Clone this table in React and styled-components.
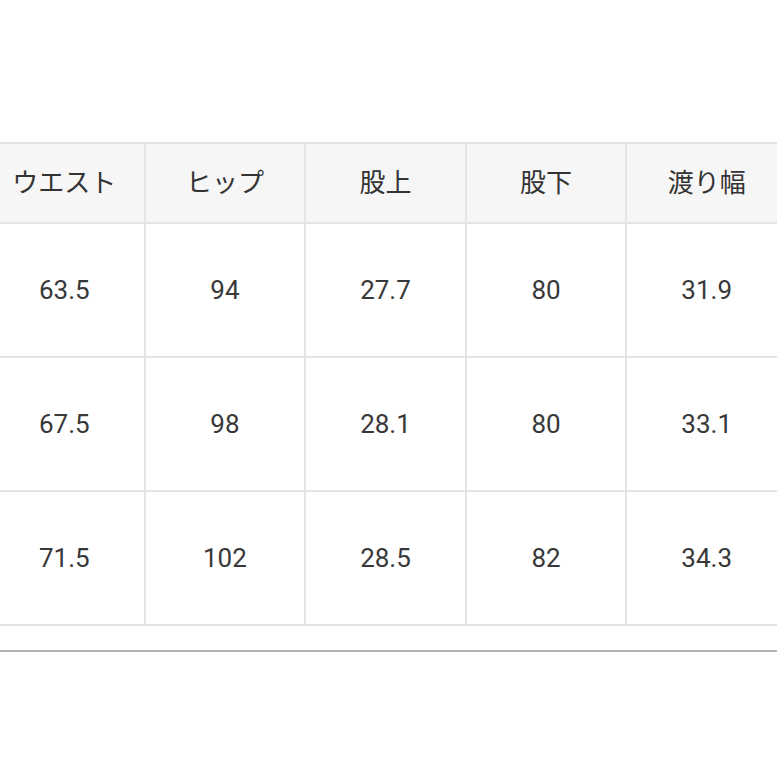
import React from "react";
import styled, { createGlobalStyle } from "styled-components";

const Global = createGlobalStyle`
  html, body { margin: 0; padding: 0; background: #ffffff; }
  body { font-family: Roboto, "Noto Sans CJK JP", sans-serif; overflow: hidden; }
`;

const Page = styled.div`
  width: 777px;
  height: 777px;
  overflow: hidden;
  padding-top: 142px;
  box-sizing: border-box;
`;

const TableWrap = styled.div`
  margin-left: -17px;
  width: 820px;
`;

const Table = styled.table`
  border-collapse: collapse;
  table-layout: fixed;
  width: 805px;
`;

const Th = styled.th`
  width: 159px;
  height: 80px;
  padding: 0 0 4px;
  box-sizing: border-box;
  border: 2px solid #e4e4e4;
  background: #f6f6f6;
  font-family: "Noto Sans CJK JP", sans-serif;
  font-weight: 400;
  font-size: 26px;
  line-height: 1;
  color: #333333;
  text-align: center;
  vertical-align: middle;
`;

const Td = styled.td`
  height: ${(p) => p.$h}px;
  padding: 0;
  border: 2px solid #e4e4e4;
  background: #ffffff;
  font-family: Roboto, sans-serif;
  font-size: 26px;
  color: #383838;
  text-align: center;
  vertical-align: middle;
`;

const Rule = styled.div`
  margin-top: 24px;
  height: 2px;
  background: #b4b4b4;
`;

const headers = ["ウエスト", "ヒップ", "股上", "股下", "渡り幅"];
const rows = [
  { h: 132, v: ["63.5", "94", "27.7", "80", "31.9"] },
  { h: 132, v: ["67.5", "98", "28.1", "80", "33.1"] },
  { h: 132, v: ["71.5", "102", "28.5", "82", "34.3"] },
];

export default function App() {
  return (
    <Page>
      <Global />
      <TableWrap>
        <Table>
          <thead>
            <tr>
              {headers.map((h) => (
                <Th key={h}>{h}</Th>
              ))}
            </tr>
          </thead>
          <tbody>
            {rows.map((r, i) => (
              <tr key={i}>
                {r.v.map((v, j) => (
                  <Td key={j} $h={r.h}>
                    {v}
                  </Td>
                ))}
              </tr>
            ))}
          </tbody>
        </Table>
      </TableWrap>
      <Rule />
    </Page>
  );
}
